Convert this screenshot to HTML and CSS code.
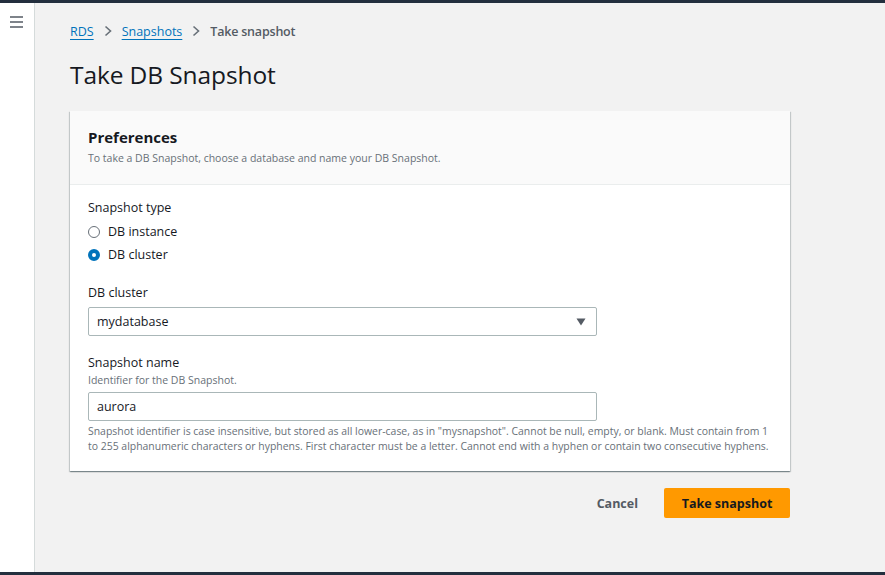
FILE: index.html
```html
<!DOCTYPE html>
<html>
<head>
<meta charset="utf-8">
<link rel="stylesheet" href="styles.css">
</head>
<body>
<div class="topbar"></div>
<div class="shell">
  <aside class="sidebar">
    <svg class="menu" width="14" height="12" viewBox="0 0 14 12"><path d="M0 1h13M0 6h13M0 11h13" stroke="#545b64" stroke-width="1.6" fill="none"/></svg>
  </aside>
  <main class="main">
    <nav class="crumbs">
      <a class="crumb-link">RDS</a>
      <svg class="chev" width="10" height="12" viewBox="0 0 10 12"><path d="M2.5 1.5l5 4.5-5 4.5" stroke="#687078" stroke-width="1.6" fill="none"/></svg>
      <a class="crumb-link">Snapshots</a>
      <svg class="chev" width="10" height="12" viewBox="0 0 10 12"><path d="M2.5 1.5l5 4.5-5 4.5" stroke="#687078" stroke-width="1.6" fill="none"/></svg>
      <span class="crumb-current">Take snapshot</span>
    </nav>
    <h1 class="title">Take DB Snapshot</h1>
    <section class="card">
      <header class="card-head">
        <h2 class="card-title">Preferences</h2>
        <p class="card-desc">To take a DB Snapshot, choose a database and name your DB Snapshot.</p>
      </header>
      <div class="card-body">
        <div class="field">
          <div class="label">Snapshot type</div>
          <div class="radios">
            <label class="radio"><span class="dot"></span>DB instance</label>
            <label class="radio"><span class="dot on"></span>DB cluster</label>
          </div>
        </div>
        <div class="field">
          <div class="label">DB cluster</div>
          <div class="select">
            <span>mydatabase</span>
            <svg width="10" height="8" viewBox="0 0 10 8"><path d="M0.5 0.5h9L5 7.5z" fill="#545b64"/></svg>
          </div>
        </div>
        <div class="field">
          <div class="label">Snapshot name</div>
          <div class="hint">Identifier for the DB Snapshot.</div>
          <div class="input">aurora</div>
          <div class="constraint">Snapshot identifier is case insensitive, but stored as all lower-case, as in "mysnapshot". Cannot be null, empty, or blank. Must contain from 1 to 255 alphanumeric characters or hyphens. First character must be a letter. Cannot end with a hyphen or contain two consecutive hyphens.</div>
        </div>
      </div>
    </section>
    <div class="actions">
      <button class="btn-link">Cancel</button>
      <button class="btn-primary">Take snapshot</button>
    </div>
  </main>
</div>
<div class="bottombar"></div>
</body>
</html>
```
FILE: styles.css
```css
* { box-sizing: border-box; }
html, body { margin: 0; padding: 0; height: 100%; }
body {
  font-family: "Open Sans", "Noto Sans", Arial, sans-serif;
  color: #16191f;
  background: #f2f2f2;
  display: flex;
  flex-direction: column;
  overflow: hidden;
}
.topbar { height: 3px; background: #232f3e; flex: none; }
.bottombar { height: 3px; background: #232f3e; flex: none; }
.shell { flex: 1; display: flex; min-height: 0; }
.sidebar {
  width: 35px;
  flex: none;
  background: #fff;
  border-right: 1px solid #d5dbdb;
  padding: 13px 0 0 10px;
}
.menu { display: block; }
.main { flex: 1; padding: 0 95px 0 35px; }
.crumbs {
  display: flex;
  align-items: center;
  height: 56px;
  font-size: 12.5px;
  gap: 9px;
}
.crumb-link { color: #0073bb; text-decoration: underline; text-underline-offset: 3px; }
.crumb-current { color: #545b64; font-weight: 600; letter-spacing: -0.2px; }
.chev { display: block; }
.title {
  margin: 0;
  font-size: 24.5px;
  font-weight: 400;
  line-height: 30px;
  padding-bottom: 21px;
  padding-top: 1px;
  letter-spacing: -0.1px;
}
.card {
  background: #fff;
  box-shadow: 0 1px 1px 0 rgba(0,28,36,.3), 1px 1px 1px 0 rgba(0,28,36,.15), -1px 1px 1px 0 rgba(0,28,36,.15);
}
.card-head {
  background: #fafafa;
  border-bottom: 1px solid #eaeded;
  padding: 16px 18px 18px;
}
.card-title { margin: 0; font-size: 15px; font-weight: 700; line-height: 20px; }
.card-desc { margin: 3px 0 0; font-size: 10.5px; color: #687078; line-height: 16px; }
.card-body { padding: 14px 18px 17px; }
.field { display: flex; flex-direction: column; align-items: flex-start; margin-bottom: 18px; }
.field:last-child { margin-bottom: 0; }
.label { font-size: 12.5px; line-height: 18px; margin-bottom: 5px; }
.hint { font-size: 10.5px; color: #687078; line-height: 14px; margin: -4px 0 5px; }
.radios { display: flex; flex-direction: column; gap: 5px; margin-top: 1px; margin-bottom: 2px; }
.radio { display: flex; align-items: center; font-size: 12.5px; line-height: 18px; gap: 8px; }
.dot {
  width: 12px; height: 12px; border-radius: 50%;
  border: 1.5px solid #687078; background: #fff; flex: none;
}
.dot.on { border: 4px solid #0073bb; }
.select, .input {
  width: 509px;
  height: 29px;
  border: 1px solid #aab7b8;
  border-radius: 2px;
  background: #fff;
  display: flex;
  align-items: center;
  padding: 0 10px 0 8px;
  font-size: 12.5px;
}
.select { justify-content: space-between; }
.constraint { font-size: 10.45px; color: #687078; line-height: 15px; margin-top: 3px; }
.actions { display: flex; justify-content: flex-end; align-items: center; gap: 26px; margin-top: 17px; }
.btn-link {
  border: 0; background: none; font: inherit; font-size: 12.5px; font-weight: 700; color: #545b64; padding: 0;
}
.btn-primary {
  border: 0; border-radius: 2px; background: #ff9900; color: #16191f;
  font: inherit; font-size: 12.5px; font-weight: 700;
  width: 126px; height: 30px; padding: 0;
}
```
